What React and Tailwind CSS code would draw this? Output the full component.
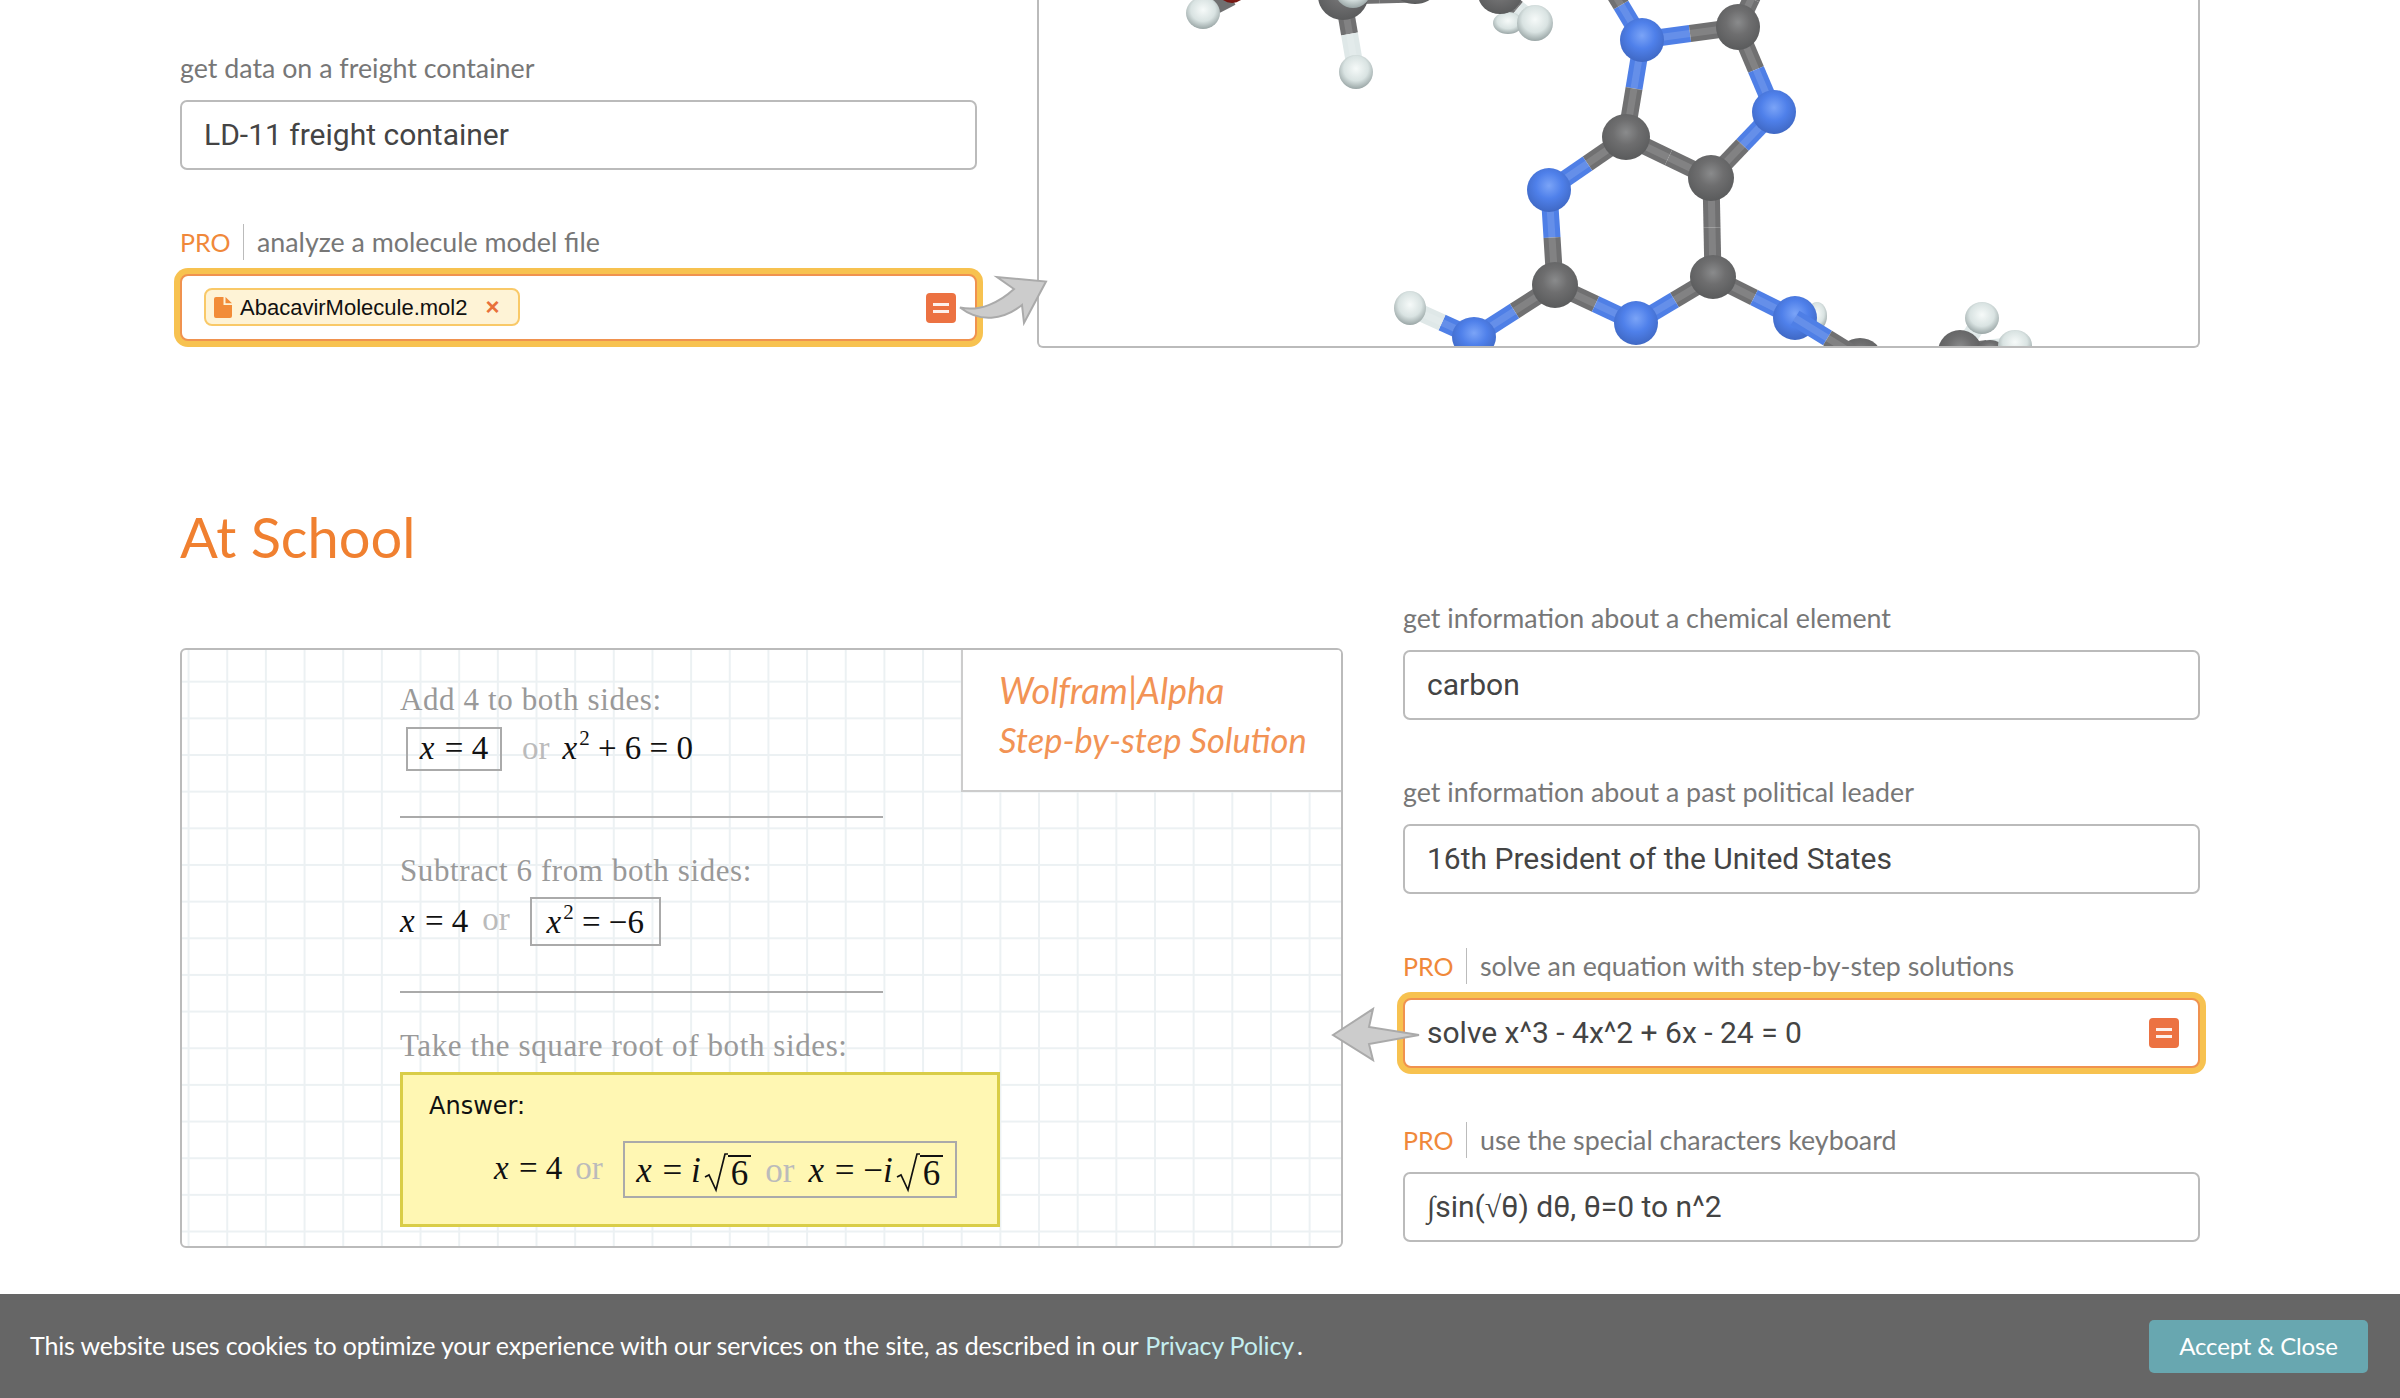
const atoms = {
  m: [1410, 308, 16, 17, 'h'], z: [1817, 316, 10, 14, 'h'], q: [1508, 23, 15, 11, 'h'],
  a: [1642, 40, 22, 22, 'n'], b: [1738, 27, 22, 23, 'c'], c: [1774, 112, 22, 22, 'n'], d: [1626, 137, 24, 23, 'c'],
  e: [1711, 178, 23, 23, 'c'], f: [1549, 190, 22, 22, 'n'], g: [1713, 277, 23, 22, 'c'], i: [1555, 285, 23, 23, 'c'],
  j: [1636, 323, 22, 22, 'n'], k: [1474, 337, 22, 20, 'n'], l: [1795, 318, 22, 22, 'n'],
  n: [1356, 72, 17, 17, 'h'], o: [1203, 13, 17, 16, 'h'],
  r: [1343, -4, 25, 24, 'c'], R: [1353, -10, 18, 18, 'h'], s: [1415, -6, 18, 10, 'c'], t: [1500, -6, 22, 20, 'c'], p: [1535, 23, 18, 18, 'h'], u: [1232, -6, 12, 9, 'o'],
  v: [1860, 358, 22, 20, 'c'], E: [1840, 349, 10, 6, 'h'], w: [1960, 352, 22, 22, 'c'], x: [1982, 318, 17, 16, 'h'], W: [1990, 350, 14, 10, 'c'], y: [2015, 345, 17, 15, 'h'],
  A: [1600, -30, 10, 10, 'c'], B: [1765, -30, 10, 10, 'c'],
};
const bonds = ['aA', 'ab', 'bB', 'bc', 'ad', 'ce', 'de', 'df', 'eg', 'fi', 'gj', 'ij', 'ik', 'gl', 'km', 'rn', 'tp', 'wx', 'wy', 'rs'];
const topBonds = ['lv'];
const bondCol = { c: '#707071', n: '#4f7fe6', h: '#dfe8e8', o: '#7a1a12' };
const atomFill = { c: 'url(#gc)', n: 'url(#gn)', h: 'url(#gh)', o: 'url(#go)' };

function Bond({ b }) {
  const p = atoms[b[0]], q = atoms[b[1]];
  const mx = (p[0] + q[0]) / 2, my = (p[1] + q[1]) / 2;
  return (
    <g strokeWidth="17">
      <line x1={p[0]} y1={p[1]} x2={mx} y2={my} stroke={bondCol[p[4]]} />
      <line x1={mx} y1={my} x2={q[0]} y2={q[1]} stroke={bondCol[q[4]]} />
      <line x1={p[0]} y1={p[1]} x2={q[0]} y2={q[1]} stroke="#ffffff" strokeOpacity="0.13" strokeWidth="7" />
    </g>
  );
}

function Molecule() {
  return (
    <svg className="absolute inset-0 w-full h-full" viewBox="1039 0 1159 346">
      <defs>
        <radialGradient id="gc" cx="50%" cy="40%" r="60%"><stop offset="0" stopColor="#8a8b8c" /><stop offset="0.45" stopColor="#6e6e6f" /><stop offset="1" stopColor="#5a5b5c" /></radialGradient>
        <radialGradient id="gn" cx="50%" cy="40%" r="60%"><stop offset="0" stopColor="#7ba4f7" /><stop offset="0.5" stopColor="#4f80ea" /><stop offset="1" stopColor="#3f68c4" /></radialGradient>
        <radialGradient id="gh" cx="50%" cy="40%" r="60%"><stop offset="0" stopColor="#f6faf9" /><stop offset="0.6" stopColor="#d9e3e2" /><stop offset="1" stopColor="#9aa6a6" /></radialGradient>
        <radialGradient id="go" cx="50%" cy="40%" r="60%"><stop offset="0" stopColor="#a22" /><stop offset="1" stopColor="#701510" /></radialGradient>
      </defs>
      {bonds.map((b) => <Bond key={b} b={b} />)}
      <line x1="1203" y1="13" x2="1232" y2="-2" stroke="#707071" strokeWidth="15" />
      {Object.entries(atoms).map(([k, a]) => (
        <ellipse key={k} cx={a[0]} cy={a[1]} rx={a[2]} ry={a[3]} fill={atomFill[a[4]]} />
      ))}
      {topBonds.map((b) => <Bond key={b} b={b} />)}
    </svg>
  );
}

function Label({ pro, children }) {
  return (
    <div className="h-[36px] mb-[14px] flex items-center text-[26.8px] text-[#777777] font-['Lato',sans-serif] whitespace-nowrap">
      {pro && <span className="text-[25px] text-[#f0883a] w-[64px] h-[36px] leading-[36px] border-r border-[#bbbbbb] mr-[13px] shrink-0">PRO</span>}
      <span>{children}</span>
    </div>
  );
}

function EqIcon() {
  return (
    <div className="absolute right-[19px] top-1/2 -translate-y-1/2 w-[30px] h-[30px] rounded-[4px] bg-[#ec7242] flex flex-col items-center justify-center gap-[4px]">
      <div className="w-[16px] h-[3px] bg-white/90" />
      <div className="w-[16px] h-[3px] bg-white/90" />
    </div>
  );
}

function Field({ label, pro, active, short, children }) {
  return (
    <div>
      <Label pro={pro}>{label}</Label>
      <div className={`relative flex items-center ${short ? 'h-[67px]' : 'h-[70px] pb-[2px]'} pl-[22px] font-['Roboto',sans-serif] text-[30px] text-[#444444] bg-white whitespace-nowrap border-2 ${active ? "rounded-[8px] border-[#f0924f] shadow-[0_0_0_6px_#f7c250]" : 'rounded-[7px] border-[#bbbbbb]'}`}>
        {children}
        {active && <EqIcon />}
      </div>
    </div>
  );
}

const mathCls = "font-['Liberation_Serif',serif] text-[33px] text-[#111111] whitespace-nowrap";
const X = () => <i className="pr-[2px]">x</i>;
const Sq = () => <sup className="text-[21px] relative top-[-2px] leading-none align-super">2</sup>;
const Or = () => <span className="text-[#bbbbbb] font-['Liberation_Serif',serif]">or</span>;

function Root6() {
  return (
    <span className="inline-flex items-end">
      <svg width="24" height="40" viewBox="0 0 24 40" className="mb-[-3px]"><path d="M1 24 L5 22 L12 37 L21 1 H24" fill="none" stroke="#111" strokeWidth="1.7" /></svg>
      <span className="border-t-2 border-[#111111] leading-[33px] px-[3px]">6</span>
    </span>
  );
}

function Step({ children }) {
  return <div className="h-[36px] leading-[39px] font-['Liberation_Serif',serif] text-[31px] text-[#999999] tracking-[0.6px] whitespace-nowrap">{children}</div>;
}

function Rule() {
  return <div className="w-[483px] h-[2px] bg-[#aaaaaa] mt-[45px]" />;
}

function Panel() {
  return (
    <div className="relative mt-[48px] h-[600px] rounded-[6px] border-2 border-[#bbbbbb] overflow-hidden pl-[218px] pt-[30px] bg-white bg-[linear-gradient(to_right,#ecf1f3_2px,transparent_2px),linear-gradient(to_bottom,#ecf1f3_2px,transparent_2px)] bg-[size:38.67px_36.67px] bg-[position:5.6px_30.7px]">
      <Step>Add 4 to both sides:</Step>
      <div className={`mt-[11px] h-[44px] flex items-center ${mathCls}`}>
        <div className="ml-[6px] w-[96px] h-[44px] border-2 border-[#aaaaaa] flex items-center justify-center"><span><X /> = 4</span></div>
        <div className="ml-[20px] mr-[13px]"><Or /></div>
        <span><X /><Sq /> + 6 = 0</span>
      </div>
      <Rule />
      <div className="mt-[33px]"><Step>Subtract 6 from both sides:</Step></div>
      <div className={`mt-[10px] h-[49px] flex items-center ${mathCls}`}>
        <span><X /> = 4</span>
        <div className="ml-[14px] mr-[20px] -mt-[4px]"><Or /></div>
        <div className="w-[131px] h-[49px] border-2 border-[#aaaaaa] flex items-center justify-center pt-[2px]"><span><X /><Sq /> = −6</span></div>
      </div>
      <Rule />
      <div className="mt-[33px]"><Step>Take the square root of both sides:</Step></div>
      <div className="mt-[10px] w-[600px] h-[155px] bg-[#fff7b3] border-[3px] border-[#d9cd48] pl-[26px]">
        <div className="mt-[13px] h-[36px] leading-[36px] font-['DejaVu_Sans',sans-serif] text-[24px] text-[#111111]">Answer:</div>
        <div className={`flex items-center ml-[65px] mt-[17px] h-[57px] ${mathCls}`}>
          <span className="-mt-[2px]"><X /> = 4</span>
          <div className="ml-[13px] mr-[20px] -mt-[2px]"><Or /></div>
          <div className="w-[334px] h-[57px] border-2 border-[#aaaaaa] flex items-center justify-center gap-[14px] pt-[4px] text-[35px]">
            <span className="inline-flex items-center gap-[3px]"><span><X /> = <i>i</i></span><Root6 /></span>
            <Or />
            <span className="inline-flex items-center gap-[3px]"><span><X /> = −<i>i</i></span><Root6 /></span>
          </div>
        </div>
      </div>
      <div className="absolute right-0 top-0 w-[380px] h-[142px] bg-white border-l-2 border-b-2 border-[#cccccc] pl-[36px] pt-[15px] font-['Lato',sans-serif] italic leading-[50px] text-[#f29355] whitespace-nowrap">
        <div className="text-[36px]">Wolfram|Alpha</div>
        <div className="text-[34.5px]">Step-by-step Solution</div>
      </div>
    </div>
  );
}

export default function App() {
  return (
    <div className="relative w-full h-[1398px] overflow-hidden bg-white flex flex-col">
      <main className="h-[1294px] ml-[180px] w-[2020px]">
        <section className="h-[346px] grid grid-cols-[797px_1163px] gap-[60px] items-start">
          <div className="pt-[50px] flex flex-col gap-[54px]">
            <Field label="get data on a freight container">LD-11 freight container</Field>
            <Field label="analyze a molecule model file" pro active short>
              <div className="h-[38px] w-[316px] -mt-[1px] rounded-[8px] border-2 border-[#f9c968] bg-[#fef3d6] flex items-center pl-[8px] font-['Liberation_Sans',sans-serif] text-[22px] text-[#111111]">
                <svg width="18" height="21" viewBox="0 0 18 21" className="shrink-0 mr-[8px]">
                  <path d="M2 0H9.5V8H18V19a2 2 0 0 1-2 2H2a2 2 0 0 1-2-2V2a2 2 0 0 1 2-2z" fill="#f28c38" />
                  <path d="M11.5 0L18 6.3H11.5z" fill="#f28c38" />
                </svg>
                <span>AbacavirMolecule.mol2</span>
                <span className="ml-[18px] text-[#e8703a] font-bold text-[24px] leading-none">×</span>
              </div>
            </Field>
          </div>
          <div className="relative h-[348px] rounded-b-[6px] border-x-2 border-b-2 border-[#bbbbbb] overflow-hidden">
            <Molecule />
          </div>
        </section>
        <h2 className="mt-[156px] mb-[28px] h-[70px] leading-[70px] font-['Lato',sans-serif] text-[56px] text-[#f08030]">At School</h2>
        <section className="grid grid-cols-[1163px_797px] gap-[60px] items-start">
          <Panel />
          <div className="flex flex-col gap-[54px]">
            <Field label="get information about a chemical element">carbon</Field>
            <Field label="get information about a past political leader">16th President of the United States</Field>
            <Field label="solve an equation with step-by-step solutions" pro active>solve x^3 - 4x^2 + 6x - 24 = 0</Field>
            <Field label="use the special characters keyboard" pro>
              <span><span className="font-['Liberation_Serif',serif] italic">∫</span>sin(<span className="font-['Liberation_Serif',serif]">√</span>θ) dθ, θ=0 to n^2</span>
            </Field>
          </div>
        </section>
      </main>
      <footer className="h-[104px] bg-[#666666] flex items-center justify-between pl-[30px] pr-[32px] font-['Lato',sans-serif] text-[25px] tracking-[-0.15px] text-white whitespace-nowrap">
        <div>This website uses cookies to optimize your experience with our services on the site, as described in our <span className="ml-[1px] text-[#c4eef0]">Privacy Policy</span><span className="ml-[3px]">.</span></div>
        <button className="w-[219px] h-[53px] rounded-[5px] bg-[#68a7b0] text-white text-[24px]">Accept &amp; Close</button>
      </footer>
      <svg className="absolute inset-0 pointer-events-none" width="2400" height="1398" viewBox="0 0 2400 1398">
        <path d="M960 307.5 C980 312 1000 302 1014 289 L997 277 L1046 281.5 L1024 323 L1022 305 C1003 320 980 323 960 307.5Z" fill="#cccccc" stroke="#aaaaaa" strokeWidth="2" />
        <path d="M1333 1035 L1373 1009 L1369 1027 L1419 1035 L1369 1044 L1373 1060Z" fill="#cccccc" stroke="#aaaaaa" strokeWidth="2" />
      </svg>
    </div>
  );
}
